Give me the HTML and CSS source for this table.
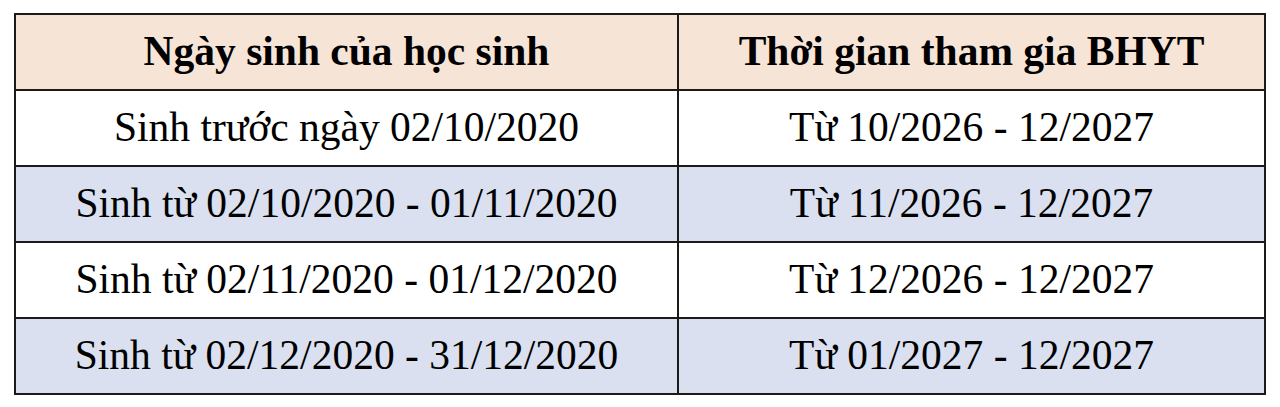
FILE: index.html
```html
<!DOCTYPE html>
<html lang="vi">
<head>
<meta charset="utf-8">
<link rel="stylesheet" href="styles.css">
</head>
<body>
<table class="bhyt">
  <tr class="head">
    <th class="c1">Ngày sinh của học sinh</th>
    <th class="c2">Thời gian tham gia BHYT</th>
  </tr>
  <tr class="plain">
    <td>Sinh trước ngày 02/10/2020</td>
    <td>Từ 10/2026 - 12/2027</td>
  </tr>
  <tr class="alt">
    <td>Sinh từ 02/10/2020 - 01/11/2020</td>
    <td>Từ 11/2026 - 12/2027</td>
  </tr>
  <tr class="plain">
    <td>Sinh từ 02/11/2020 - 01/12/2020</td>
    <td>Từ 12/2026 - 12/2027</td>
  </tr>
  <tr class="alt">
    <td>Sinh từ 02/12/2020 - 31/12/2020</td>
    <td>Từ 01/2027 - 12/2027</td>
  </tr>
</table>
</body>
</html>
```
FILE: styles.css
```css
html, body {
  margin: 0;
  padding: 0;
  background: #ffffff;
}
body {
  padding: 13px 14px 0 14px;
  font-family: "Liberation Serif", "Times New Roman", serif;
  color: #000;
}
.bhyt {
  width: 1252px;
  border-collapse: collapse;
  table-layout: fixed;
}
.bhyt th, .bhyt td {
  border: 2px solid #1a1a1a;
  height: 74px;
  padding: 0;
  text-align: center;
  vertical-align: middle;
  font-size: 41.5px;
  line-height: 1;
}
.bhyt th {
  font-weight: bold;
}
.c1 { width: 661px; }
.head { background: #f6e4d7; }
.plain { background: #ffffff; }
.alt { background: #dae0f0; }
```
